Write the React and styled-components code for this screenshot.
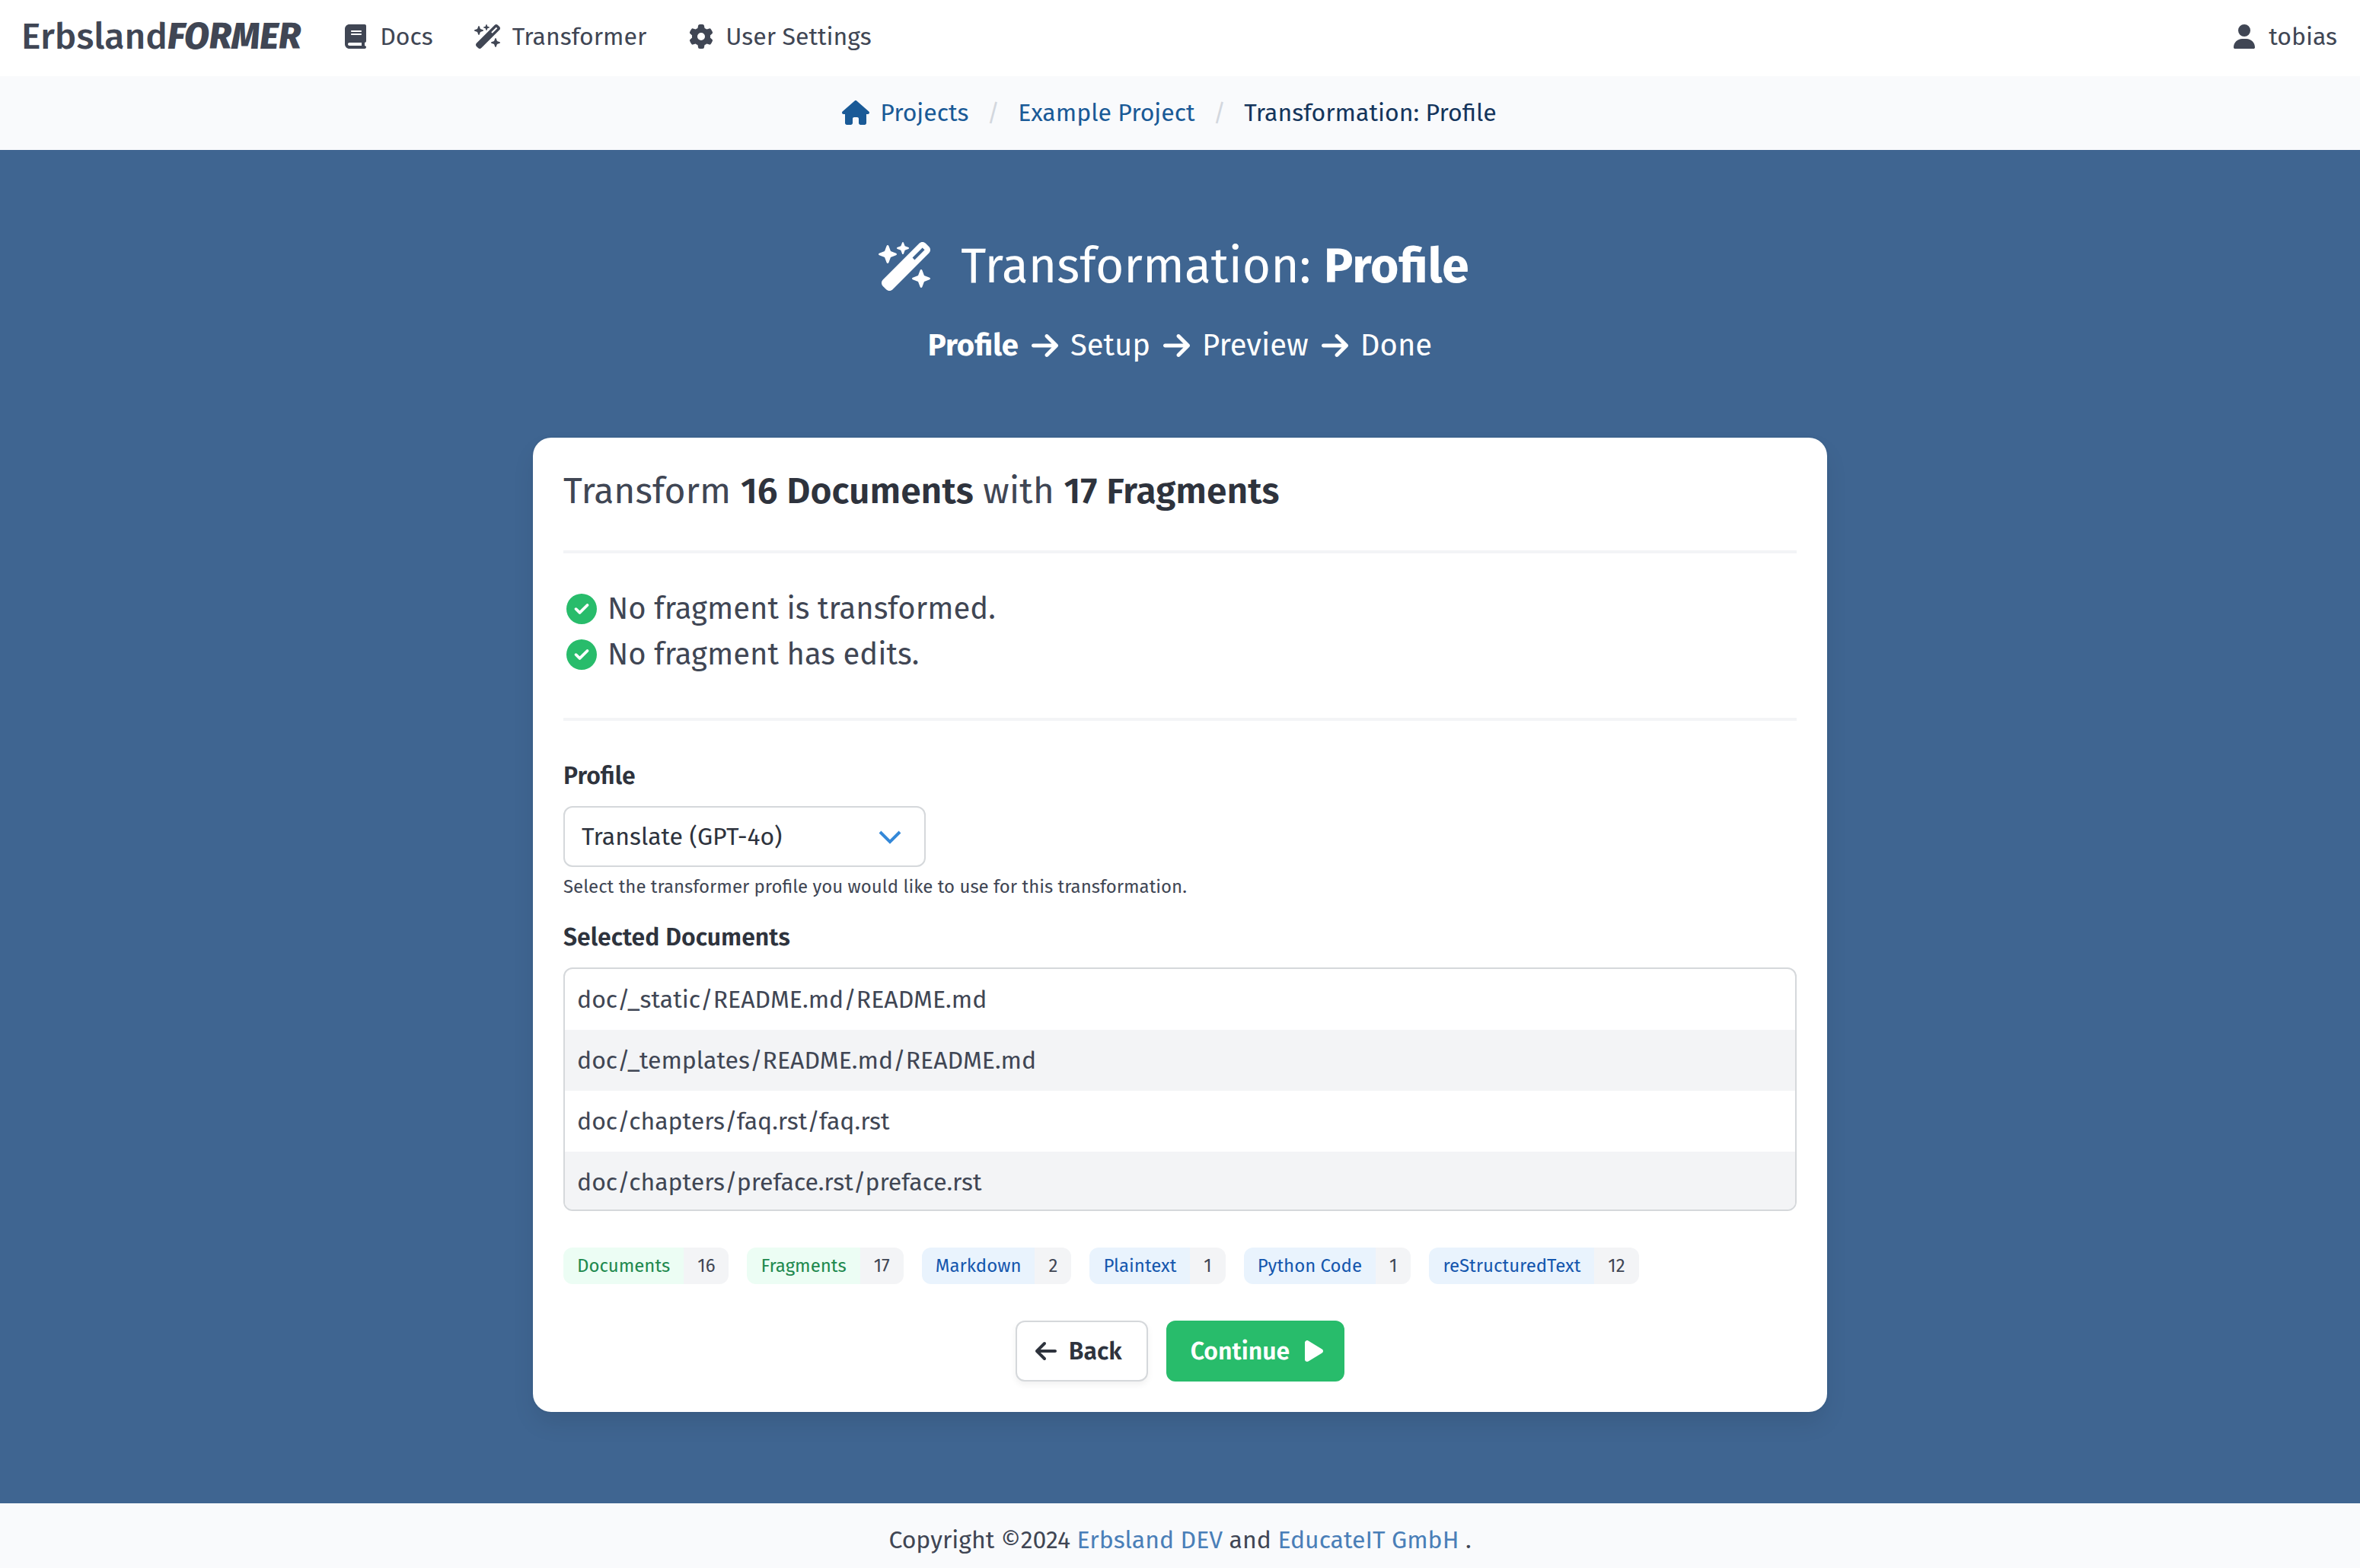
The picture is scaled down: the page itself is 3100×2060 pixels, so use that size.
import React from "react";
import styled, { createGlobalStyle } from "styled-components";
import { IconContext } from "react-icons";
import {
  FaArrowLeft,
  FaArrowRight,
  FaBook,
  FaCircleCheck,
  FaGear,
  FaHouse,
  FaPlay,
  FaUser,
  FaWandMagicSparkles,
} from "react-icons/fa6";

const color = {
  text: "#404654",
  strong: "#2e333d",
  hero: "#3f6591",
  soft: "#f9fafc",
  line: "#f3f4f6",
  border: "#d5d8db",
  link: "#1a5a97",
  linkActive: "#14355c",
  footerLink: "#4a7fb8",
  success: "#28bc6b",
};

const GlobalStyle = createGlobalStyle`
  *, *::before, *::after { box-sizing: border-box; }
  body {
    margin: 0;
    background: ${color.soft};
    color: ${color.text};
    font-family: "Fira Sans", Roboto, "Noto Sans", sans-serif;
    font-size: 32px;
    line-height: 48px;
  }
  h1, h2, p, ol, ul { margin: 0; padding: 0; font-weight: 400; }
  ol, ul { list-style: none; }
  a { color: inherit; text-decoration: none; }
  button, select { font: inherit; }
  svg { flex: none; width: auto; height: 1em; }
`;

/* Height comes from the font size, width from each glyph's own view box. */
const iconDefaults = { size: "100%" };

const Page = styled.div`
  display: flex;
  flex-direction: column;
  min-height: 100vh;
`;

const Navbar = styled.nav`
  display: flex;
  align-items: center;
  min-height: 100px;
  padding: 0 30px 4px 28px;
  background: #fff;
`;

const Brand = styled.a`
  margin-right: 48px;
  font-size: 48px;
  font-weight: 500;
  line-height: 72px;

  em {
    font-weight: 800;
  }
`;

const NavLink = styled.a`
  display: flex;
  align-items: center;
  gap: 8px;
  margin-right: ${(p) => (p.$end ? 0 : 48)}px;
  margin-left: ${(p) => (p.$end ? "auto" : 0)};
`;

const IconBox = styled.span`
  display: flex;
  flex: none;
  align-items: center;
  justify-content: center;
  width: ${(p) => p.$box || 48}px;
  height: 48px;
  font-size: ${(p) => p.$size || 32}px;
  color: ${(p) => p.$color || "inherit"};
`;

const BreadcrumbBar = styled.nav`
  min-height: 97px;
  padding: 24px 0;
`;

const Crumbs = styled.ol`
  display: flex;
  justify-content: center;
  padding-right: 34px;
`;

const Crumb = styled.li`
  display: flex;
  color: ${(p) => (p.$active ? color.linkActive : color.link)};

  &:not(:first-child)::before {
    content: "/";
    padding: 0 24px;
    color: #d3d7de;
  }

  a {
    display: flex;
    gap: 8px;
  }
`;

const Hero = styled.main`
  display: flex;
  flex-direction: column;
  align-items: center;
  padding: 117px 40px 120px;
  background: ${color.hero};
  color: #fff;
`;

const Title = styled.h1`
  display: flex;
  align-items: center;
  gap: 24px;
  padding-right: 28px;
  font-size: 64px;
  line-height: 72px;
`;

const Steps = styled.ol`
  display: flex;
  margin-top: 38px;
  font-size: 40px;
  line-height: 60px;
`;

const Step = styled.li`
  display: flex;
  align-items: center;
  font-weight: ${(p) => (p.$current ? 700 : 400)};

  svg {
    margin: 0 16px 0 17px;
  }
`;

const Card = styled.form`
  width: 100%;
  max-width: 1700px;
  margin-top: 91px;
  padding: 40px;
  border-radius: 24px;
  background: #fff;
  color: ${color.text};
  box-shadow: 0 16px 32px -4px rgba(10, 10, 10, 0.1), 0 0 0 2px rgba(10, 10, 10, 0.02);
`;

const Heading = styled.h2`
  font-size: 48px;
  line-height: 60px;

  strong {
    color: ${color.strong};
    font-weight: 600;
  }
`;

const Divider = styled.hr`
  height: 4px;
  margin: 48px 0;
  border: 0;
  background: ${color.line};
`;

const Checks = styled.ul`
  margin: -5px 0 53px;
`;

const Check = styled.li`
  display: flex;
  align-items: center;
  gap: 10px;
  font-size: 40px;
  line-height: 60px;
`;

const Label = styled.label`
  display: block;
  margin-bottom: 16px;
  color: ${color.strong};
  font-weight: 600;
`;

const SelectWrap = styled.div`
  position: relative;
  width: 476px;

  svg {
    position: absolute;
    top: 32px;
    right: 32px;
    width: 30px;
    height: 18px;
    pointer-events: none;
  }
`;

const Select = styled.select`
  display: block;
  width: 100%;
  height: 80px;
  padding: 0 80px 0 22px;
  appearance: none;
  border: 2px solid ${color.border};
  border-radius: 12px;
  background: #fff;
  color: ${color.strong};
`;

const Help = styled.p`
  margin: 8px 0 24px;
  font-size: 24px;
  line-height: 36px;
`;

const DocumentList = styled.ul`
  max-height: 320px;
  overflow: hidden;
  border: 2px solid ${color.border};
  border-radius: 12px;
`;

const DocumentRow = styled.li`
  padding: 16px;

  &:nth-child(even) {
    background: ${color.line};
  }
`;

const Tags = styled.ul`
  display: flex;
  flex-wrap: wrap;
  gap: 24px;
  margin: 48px 0;
`;

const TagPair = styled.li`
  display: flex;
  overflow: hidden;
  border-radius: 12px;
  font-size: 24px;
`;

const Tag = styled.span`
  padding: 0 18px;
  background: ${(p) => ({ success: "#ecfdf4", link: "#e9f3fd" })[p.$tone] || color.line};
  color: ${(p) => ({ success: "#20894e", link: "#1557ae" })[p.$tone] || color.text};
`;

const Buttons = styled.div`
  display: flex;
  justify-content: center;
  gap: 24px;
`;

const Button = styled.button`
  display: flex;
  align-items: center;
  gap: ${(p) => (p.$primary ? 20 : 16)}px;
  height: 80px;
  padding: ${(p) => (p.$primary ? "0 28px 0 32px" : "0 32px 0 24px")};
  border: ${(p) => (p.$primary ? "0" : `2px solid ${color.border}`)};
  border-radius: 12px;
  background: ${(p) => (p.$primary ? color.success : "#fff")};
  color: ${(p) => (p.$primary ? "#fff" : color.strong)};
  font-weight: 600;
  box-shadow: ${(p) => (p.$primary ? "none" : "0 4px 8px rgba(10, 10, 10, 0.06)")};
`;

const Footer = styled.footer`
  flex: 1;
  padding: 24px;
  text-align: center;

  a {
    color: ${color.footerLink};
  }
`;

const steps = ["Profile", "Setup", "Preview", "Done"];

const checks = ["No fragment is transformed.", "No fragment has edits."];

const documents = [
  "doc/_static/README.md/README.md",
  "doc/_templates/README.md/README.md",
  "doc/chapters/faq.rst/faq.rst",
  "doc/chapters/preface.rst/preface.rst",
];

const tags = [
  { name: "Documents", count: 16, tone: "success" },
  { name: "Fragments", count: 17, tone: "success" },
  { name: "Markdown", count: 2, tone: "link" },
  { name: "Plaintext", count: 1, tone: "link" },
  { name: "Python Code", count: 1, tone: "link" },
  { name: "reStructuredText", count: 12, tone: "link" },
];

export default function App() {
  return (
    <IconContext.Provider value={iconDefaults}>
      <GlobalStyle />
      <Page>
        <Navbar>
          <Brand href="#">
            Erbsland<em>FORMER</em>
          </Brand>
          <NavLink href="#docs">
            <IconBox><FaBook /></IconBox>
            Docs
          </NavLink>
          <NavLink href="#transformer">
            <IconBox><FaWandMagicSparkles /></IconBox>
            Transformer
          </NavLink>
          <NavLink href="#settings">
            <IconBox><FaGear /></IconBox>
            User Settings
          </NavLink>
          <NavLink href="#user" $end>
            <IconBox><FaUser /></IconBox>
            tobias
          </NavLink>
        </Navbar>

        <BreadcrumbBar aria-label="Breadcrumb">
          <Crumbs>
            <Crumb>
              <a href="#projects">
                <IconBox><FaHouse /></IconBox>
                Projects
              </a>
            </Crumb>
            <Crumb>
              <a href="#project">Example Project</a>
            </Crumb>
            <Crumb $active>
              <a href="#profile" aria-current="page">Transformation: Profile</a>
            </Crumb>
          </Crumbs>
        </BreadcrumbBar>

        <Hero>
          <Title>
            <IconBox $box={96} $size={64}><FaWandMagicSparkles /></IconBox>
            <span>
              Transformation: <strong>Profile</strong>
            </span>
          </Title>
          <Steps>
            {steps.map((step, i) => (
              <Step key={step} $current={i === 0}>
                {i > 0 && <FaArrowRight />}
                {step}
              </Step>
            ))}
          </Steps>

          <Card onSubmit={(e) => e.preventDefault()}>
            <Heading>
              Transform <strong>16 Documents</strong> with <strong>17 Fragments</strong>
            </Heading>
            <Divider />
            <Checks>
              {checks.map((text) => (
                <Check key={text}>
                  <IconBox $size={40} $color={color.success}><FaCircleCheck /></IconBox>
                  {text}
                </Check>
              ))}
            </Checks>
            <Divider />

            <Label htmlFor="profile">Profile</Label>
            <SelectWrap>
              <Select id="profile" defaultValue="translate">
                <option value="translate">Translate (GPT-4o)</option>
              </Select>
              <svg viewBox="0 0 30 18" fill="none" stroke="#3488d8" strokeWidth="4" aria-hidden="true">
                <path d="M2 2l13 13 13-13" />
              </svg>
            </SelectWrap>
            <Help>Select the transformer profile you would like to use for this transformation.</Help>

            <Label as="div" id="documents-label">Selected Documents</Label>
            <DocumentList aria-labelledby="documents-label">
              {documents.map((path) => (
                <DocumentRow key={path}>{path}</DocumentRow>
              ))}
            </DocumentList>

            <Tags>
              {tags.map((tag) => (
                <TagPair key={tag.name}>
                  <Tag $tone={tag.tone}>{tag.name}</Tag>
                  <Tag>{tag.count}</Tag>
                </TagPair>
              ))}
            </Tags>

            <Buttons>
              <Button type="button">
                <FaArrowLeft />
                Back
              </Button>
              <Button type="submit" $primary>
                Continue
                <FaPlay />
              </Button>
            </Buttons>
          </Card>
        </Hero>

        <Footer>
          Copyright ©2024 <a href="#erbsland">Erbsland DEV</a> and <a href="#educateit">EducateIT GmbH</a> .
        </Footer>
      </Page>
    </IconContext.Provider>
  );
}
